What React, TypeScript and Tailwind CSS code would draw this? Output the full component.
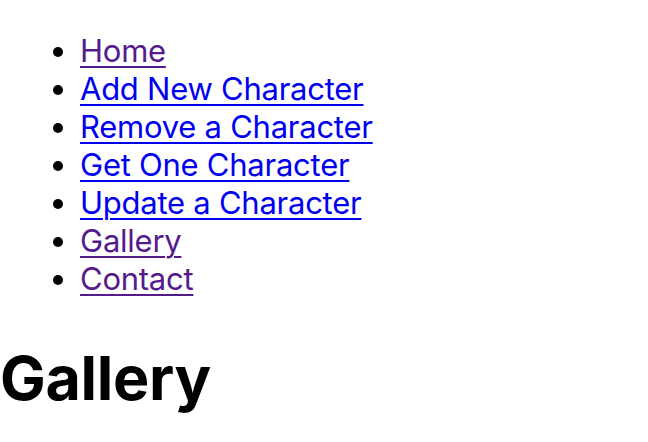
const links = [
  { label: "Home", visited: true },
  { label: "Add New Character", visited: false },
  { label: "Remove a Character", visited: false },
  { label: "Get One Character", visited: false },
  { label: "Update a Character", visited: false },
  { label: "Gallery", visited: true },
  { label: "Contact", visited: true },
];

export default function App() {
  return (
    <div className="bg-white text-black font-['Inter',sans-serif] h-[442px] overflow-hidden">
      <nav>
        <ul className="list-disc pl-[80px] my-[32px] text-[31px] leading-[38px] tracking-[-0.25px]">
          {links.map((l, i) => (
            <li key={i}>
              <a
                href="#"
                className={`underline decoration-[2px] underline-offset-[4px] ${
                  l.visited ? "text-[#551a8b]" : "text-[#0000ee]"
                }`}
              >
                {l.label}
              </a>
            </li>
          ))}
        </ul>
      </nav>
      <h1 className="text-[61px] font-bold leading-[72px] mt-[44px] tracking-[-0.3px]">Gallery</h1>
    </div>
  );
}
